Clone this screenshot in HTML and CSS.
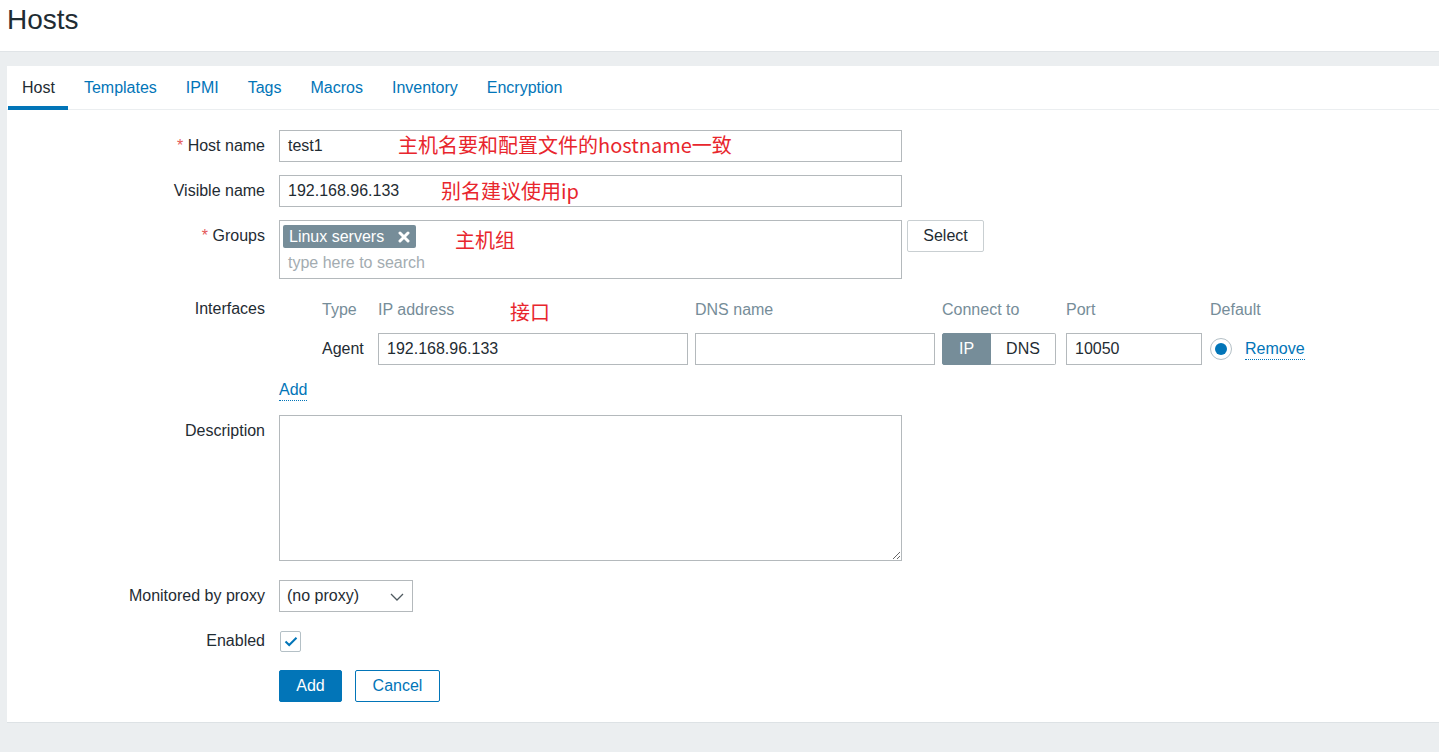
FILE: index.html
```html
<!DOCTYPE html>
<html lang="en">
<head>
<meta charset="utf-8">
<title>Hosts</title>
<link rel="stylesheet" href="styles.css">
</head>
<body>
<header class="page-header"><h1 class="page-title">Hosts</h1></header>
<main class="content">
  <section class="panel">
    <ul class="tabs">
      <li class="tab active">Host</li>
      <li class="tab">Templates</li>
      <li class="tab">IPMI</li>
      <li class="tab">Tags</li>
      <li class="tab">Macros</li>
      <li class="tab">Inventory</li>
      <li class="tab">Encryption</li>
    </ul>
    <form class="form">
      <div class="row row-m13">
        <label class="lbl"><span class="req">*</span> Host name</label>
        <div class="field"><div class="input w-full">test1</div></div>
      </div>
      <div class="row row-m13">
        <label class="lbl">Visible name</label>
        <div class="field"><div class="input w-full">192.168.96.133</div></div>
      </div>
      <div class="row row-m14">
        <label class="lbl"><span class="req">*</span> Groups</label>
        <div class="field field-inline">
          <div class="multiselect">
            <div class="ms-tags">
              <span class="tag">Linux servers
                <svg class="tag-x" width="12" height="12" viewBox="0 0 12 12"><path d="M2 2L10 10M10 2L2 10" stroke="#fff" stroke-width="3" stroke-linecap="round"/></svg>
              </span>
            </div>
            <div class="ms-search">type here to search</div>
          </div>
          <button type="button" class="btn-alt">Select</button>
        </div>
      </div>
      <div class="row row-m9">
        <label class="lbl">Interfaces</label>
        <div class="field">
          <div class="iface">
            <div class="ih">Type</div>
            <div class="ih">IP address</div>
            <div class="ih">DNS name</div>
            <div class="ih">Connect to</div>
            <div class="ih">Port</div>
            <div class="ih ih-span">Default</div>

            <div class="ic">Agent</div>
            <div class="ic"><div class="input w-ip">192.168.96.133</div></div>
            <div class="ic"><div class="input w-dns"></div></div>
            <div class="ic">
              <div class="toggle"><span class="seg seg-on">IP</span><span class="seg seg-off">DNS</span></div>
            </div>
            <div class="ic"><div class="input w-port">10050</div></div>
            <div class="ic"><span class="radio"><span class="radio-dot"></span></span></div>
            <div class="ic"><a class="link">Remove</a></div>
          </div>
        </div>
      </div>
      <div class="row row-m9">
        <div class="lbl"></div>
        <div class="field field-center"><a class="link">Add</a></div>
      </div>
      <div class="row row-m19">
        <label class="lbl">Description</label>
        <div class="field"><textarea class="textarea"></textarea></div>
      </div>
      <div class="row row-m13">
        <label class="lbl">Monitored by proxy</label>
        <div class="field">
          <div class="select">(no proxy)
            <svg class="chev" width="14" height="8" viewBox="0 0 14 8"><path d="M1 1L7 7L13 1" fill="none" stroke="#4f5a60" stroke-width="1.3"/></svg>
          </div>
        </div>
      </div>
      <div class="row row-m13">
        <label class="lbl">Enabled</label>
        <div class="field field-center">
          <span class="checkbox">
            <svg width="14" height="11" viewBox="0 0 14 11"><path d="M1.5 5.5L5.2 9L12.5 1.8" fill="none" stroke="#0275b8" stroke-width="2"/></svg>
          </span>
        </div>
      </div>
      <div class="row">
        <div class="lbl"></div>
        <div class="field buttons">
          <button type="button" class="btn-primary">Add</button>
          <button type="button" class="btn-outline">Cancel</button>
        </div>
      </div>
    </form>
    <span class="note note-1">主机名要和配置文件的hostname一致</span>
    <span class="note note-2">别名建议使用ip</span>
    <span class="note note-3">主机组</span>
    <span class="note note-4">接口</span>
  </section>
</main>
</body>
</html>
```

FILE: styles.css
```css
* { box-sizing: border-box; }
html, body { margin: 0; padding: 0; }
body {
  background: #ebeef0;
  font-family: "Liberation Sans", Arial, sans-serif;
  font-size: 16px;
  color: #1f2c33;
  height: 752px;
  overflow: hidden;
}
.page-header {
  background: #fff;
  height: 52px;
  border-bottom: 1px solid #e0e4e7;
  padding: 0 7px;
}
.page-title {
  margin: 0;
  font-weight: normal;
  font-size: 28px;
  line-height: 40px;
  color: #1f2c33;
}
.content { padding: 14px 0 0 7px; }
.panel {
  position: relative;
  background: #fff;
  border-bottom: 1px solid #dde2e5;
}
.tabs {
  list-style: none;
  margin: 0;
  padding: 0 0 0 1px;
  display: flex;
  height: 44px;
  border-bottom: 1px solid #ebeef0;
}
.tab {
  padding: 0 14.5px 0 14px;
  line-height: 43px;
  color: #0275b8;
  position: relative;
}
.tab + .tab { padding-left: 14.5px; }
.tab.active { color: #1f2c33; }
.tab.active::after {
  content: "";
  position: absolute;
  left: 0; right: 1px; bottom: -1px;
  height: 4px;
  background: #0275b8;
}
.form { padding: 20px 0 20px 0; }
.row { display: flex; align-items: flex-start; }
.row-m9 { margin-bottom: 9px; }
.row-m13 { margin-bottom: 13px; }
.row-m14 { margin-bottom: 14px; }
.row-m19 { margin-bottom: 19px; }
.lbl {
  flex: 0 0 258px;
  margin-right: 14px;
  text-align: right;
  line-height: 32px;
  min-height: 32px;
  white-space: nowrap;
}
.req { color: #e45959; }
.field { flex: 0 0 auto; }
.field-inline { display: flex; align-items: flex-start; }
.field-center { height: 32px; display: flex; align-items: center; }
.input {
  height: 32px;
  border: 1px solid #b4b9bc;
  background: #fff;
  padding: 0 8px;
  line-height: 30px;
  color: #1f2c33;
  white-space: nowrap;
}
.w-full { width: 623px; }
.w-ip { width: 310px; }
.w-dns { width: 240px; }
.w-port { width: 136px; }
.multiselect {
  width: 623px;
  height: 59px;
  border: 1px solid #b4b9bc;
  padding: 4px 3px 2px;
}
.ms-tags { display: flex; height: 23px; }
.tag {
  display: inline-flex;
  align-items: center;
  height: 23px;
  padding: 0 6px;
  background: #768d99;
  color: #fff;
  border-radius: 2px;
  line-height: 23px;
  white-space: nowrap;
}
.tag-x { margin-left: 14px; }
.ms-search {
  line-height: 30px;
  padding-left: 5px;
  color: #a3acb1;
}
.btn-alt {
  margin-left: 5px;
  width: 77px;
  height: 32px;
  background: #fff;
  border: 1px solid #c9cfd2;
  border-radius: 2px;
  font: inherit;
  color: #1f2c33;
  padding: 0;
}
.iface {
  margin-left: 43px;
  display: grid;
  grid-template-columns: 56px 317px 247px 124px 144px 35px auto;
  grid-template-rows: 32px 32px;
  row-gap: 8px;
}
.ih {
  color: #768d99;
  line-height: 34px;
  white-space: nowrap;
}
.ih-span { grid-column: 6 / span 2; }
.ic { line-height: 32px; white-space: nowrap; display: flex; align-items: center; }
.toggle { display: flex; height: 32px; width: 114px; }
.seg {
  height: 32px;
  line-height: 30px;
  text-align: center;
  border: 1px solid #b4b9bc;
}
.seg-on {
  width: 49px;
  background: #768d99;
  border-color: #768d99;
  color: #fff;
  border-radius: 2px 0 0 2px;
}
.seg-off {
  width: 65px;
  border-left: none;
  background: #fff;
  color: #1f2c33;
  border-radius: 0 2px 2px 0;
}
.radio {
  width: 22px;
  height: 22px;
  border: 1px solid #b4c0c6;
  border-radius: 50%;
  display: inline-flex;
  align-items: center;
  justify-content: center;
  background: #fff;
}
.radio-dot {
  width: 12px;
  height: 12px;
  border-radius: 50%;
  background: #0275b8;
}
.link {
  color: #0275b8;
  border-bottom: 1px dotted #0275b8;
  line-height: 20px;
  cursor: pointer;
}
.textarea {
  display: block;
  width: 623px;
  height: 146px;
  border: 1px solid #b4b9bc;
  margin: 0;
  padding: 6px 8px;
  font: inherit;
}
.select {
  width: 134px;
  height: 32px;
  border: 1px solid #b4b9bc;
  padding: 0 8px 0 7px;
  line-height: 30px;
  display: flex;
  align-items: center;
  justify-content: space-between;
  white-space: nowrap;
}
.chev { margin-top: 1px; }
.checkbox {
  width: 21px;
  height: 21px;
  margin-left: 1px;
  border: 1px solid #b4c0c6;
  border-radius: 2px;
  display: inline-flex;
  align-items: center;
  justify-content: center;
  background: #fff;
}
.buttons { display: flex; gap: 13px; }
.btn-primary {
  width: 63px;
  height: 32px;
  background: #0275b8;
  border: 1px solid #0275b8;
  border-radius: 2px;
  color: #fff;
  font: inherit;
  padding: 0;
}
.btn-outline {
  width: 85px;
  height: 32px;
  background: #fff;
  border: 1px solid #0275b8;
  border-radius: 2px;
  color: #0275b8;
  font: inherit;
  padding: 0;
}
.note {
  position: absolute;
  font-family: "Noto Sans CJK SC", "Microsoft YaHei", sans-serif;
  font-size: 20px;
  line-height: 24px;
  color: #e8262d;
  white-space: nowrap;
}
.note-1 { left: 391px; top: 67px; }
.note-2 { left: 434px; top: 113px; }
.note-3 { left: 448px; top: 162px; }
.note-4 { left: 503px; top: 234px; }
```
